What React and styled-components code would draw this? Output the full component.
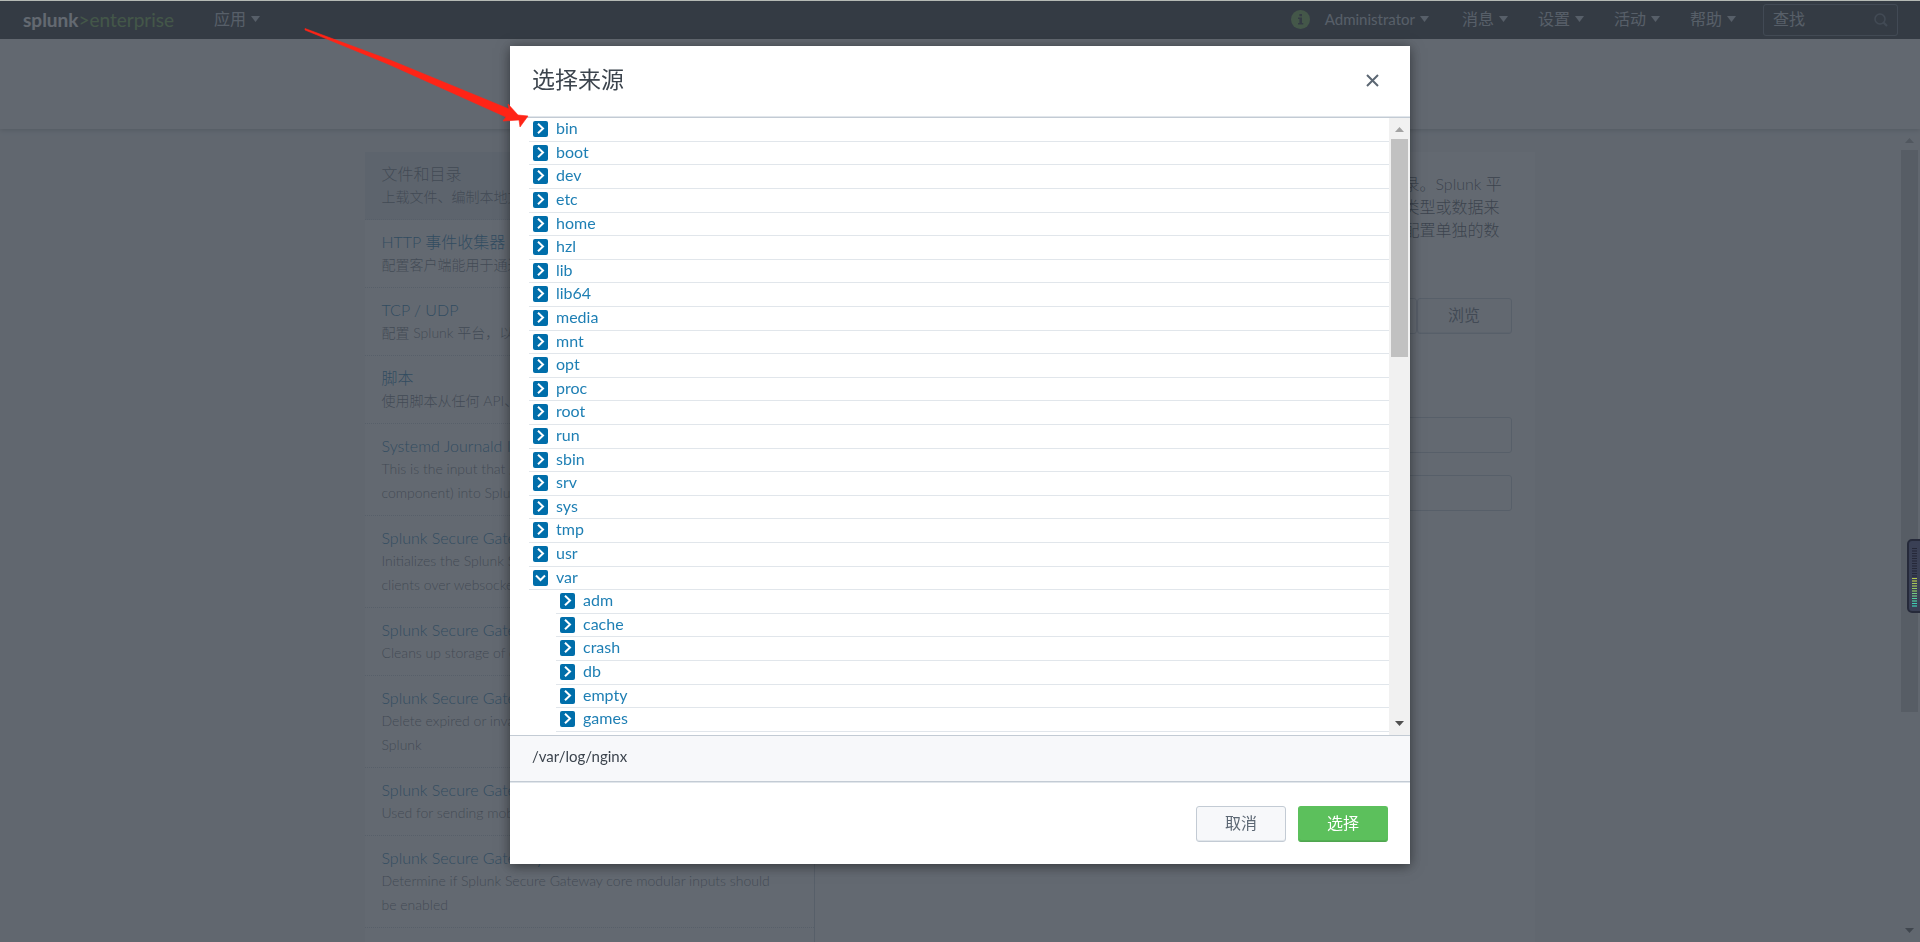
import React, { useState } from "react";
import styled, { createGlobalStyle } from "styled-components";

const GlobalStyle = createGlobalStyle`
  *, *::before, *::after {
    box-sizing: border-box;
  }

  body {
    margin: 0;
    font-family: Lato, "Noto Sans CJK SC", sans-serif;
    font-size: 16px;
    color: #3c444d;
    background: #f2f4f5;
  }

  button, input {
    font-family: inherit;
  }

  a {
    color: #006eaa;
    text-decoration: none;
  }
`;

const StyledPage = styled.div`
  display: flex;
  flex-direction: column;
  height: 100vh;
  overflow: hidden;
  border-top: 1px solid #b5bab5;
`;

const StyledNav = styled.nav`
  display: flex;
  flex-shrink: 0;
  align-items: center;
  height: 38px;
  padding: 0 22px 0 23px;
  background: #171d21;
`;

const StyledLogo = styled.a`
  display: flex;
  align-items: center;
  width: 191px;
  font-size: 19px;
  line-height: 24px;
  color: #65a637;
`;

const StyledLogoName = styled.span`
  font-weight: 700;
  color: #ffffff;
`;

const StyledNavRight = styled.div`
  display: flex;
  align-items: center;
  gap: 27px;
  margin-left: auto;
`;

const StyledMenus = styled.div`
  display: flex;
  align-items: center;
  gap: 30px;
`;

const StyledUser = styled.div`
  display: flex;
  align-items: center;
  gap: 15px;
  padding-right: 3px;
`;

const StyledInfoIcon = styled.svg`
  margin-bottom: 2px;
`;

const StyledNavItem = styled.button`
  display: flex;
  align-items: center;
  gap: 5px;
  padding: 0 0 3px;
  border: 0;
  background: none;
  font-size: ${props => (props.$small ? "15px" : "16px")};
  line-height: 24px;
  color: #c3cbd4;
`;

const StyledSearch = styled.label`
  display: flex;
  align-items: center;
  width: 135px;
  height: 32px;
  padding: 0 9px;
  border: 1px solid #5c6773;
  border-radius: 3px;
`;

const StyledSearchInput = styled.input`
  flex: 1;
  min-width: 0;
  padding: 0 0 3px;
  border: 0;
  outline: 0;
  background: none;
  font-size: 16px;
  color: #c3cbd4;

  &::placeholder {
    color: #c3cbd4;
    opacity: 1;
  }
`;

const StyledWizardBar = styled.div`
  position: relative;
  flex-shrink: 0;
  height: 90px;
  background: #f7f8fa;
  box-shadow: 0 1px 5px rgba(0, 0, 0, 0.3);
`;

const StyledMain = styled.div`
  display: flex;
  flex: 1;
  min-height: 0;
`;

const StyledContent = styled.main`
  display: flex;
  flex: 1;
  justify-content: center;
  padding-top: 23px;
  font-weight: 300;
`;

const StyledSourceList = styled.ul`
  width: 450px;
  min-height: 800px;
  margin: 0;
  padding: 0;
  list-style: none;
  background: #ffffff;
  border-right: 1px solid #c3cbd4;
`;

const StyledSource = styled.li`
  padding: 11px 30px 10px 17px;
  border-bottom: 1px dotted #c3cbd4;
  background: ${props => (props.$selected ? "#e1e6eb" : "none")};
`;

const StyledSourceTitle = styled.a`
  display: block;
  line-height: 22px;
  color: ${props => (props.$selected ? "#5c6773" : "#006eaa")};
`;

const StyledSourceText = styled.p`
  margin: 0;
  font-size: 14px;
  line-height: 24px;
  white-space: pre-line;
  color: #5c6773;
`;

const StyledSettings = styled.section`
  width: 720px;
  min-height: 800px;
  padding: 20px 23px;
  background: #ffffff;
`;

const StyledIntro = styled.p`
  width: 108px;
  margin: 0 0 57px auto;
  line-height: 23px;
  white-space: nowrap;
`;

const StyledFieldRow = styled.div`
  display: flex;
  margin: 0 0 ${props => props.$gap || 22}px 220px;
`;

const StyledInput = styled.input`
  flex: 1;
  min-width: 0;
  height: 36px;
  border: 1px solid #c3cbd4;
  border-radius: 3px;
  background: #ffffff;
`;

const StyledButton = styled.button`
  width: ${props => props.$width || 90}px;
  height: 36px;
  padding: 0 0 5px;
  border: 1px solid ${props => (props.$primary ? "#5cc05c" : "#c3cbd4")};
  border-bottom-color: ${props => (props.$primary ? "#4fa54f" : "#c3cbd4")};
  border-radius: 3px;
  background: ${props => (props.$primary ? "#5cc05c" : "#f7f8fa")};
  box-shadow: inset 0 -1px 0 ${props => (props.$primary ? "#53af53" : "#e1e6eb")};
  font-size: 16px;
  color: ${props => (props.$primary ? "#ffffff" : "#5c6773")};
`;

const StyledBackdrop = styled.div`
  position: fixed;
  inset: 1px 0 0;
  display: flex;
  justify-content: center;
  align-items: flex-start;
  padding-top: 45px;
  background: rgba(60, 68, 77, 0.8);
`;

const StyledModal = styled.div`
  width: 900px;
  max-width: 100%;
  background: #ffffff;
  box-shadow: 0 2px 12px rgba(0, 0, 0, 0.5);
`;

const StyledModalHeader = styled.header`
  display: flex;
  align-items: center;
  justify-content: space-between;
  padding: 18px 22px 23px;
  border-bottom: 1px solid #c3cbd4;
  box-shadow: inset 0 -1px 0 #e1e6eb;
`;

const StyledTitle = styled.h2`
  margin: 0;
  font-size: 23px;
  font-weight: 400;
  line-height: 30px;
`;

const StyledClose = styled.button`
  display: flex;
  padding: 3px 9px 0 0;
  border: 0;
  background: none;
`;

const StyledModalBody = styled.div`
  display: flex;
  height: 617px;
  padding-left: 19px;
  overflow: hidden;
`;

const StyledTree = styled.ul`
  flex: 1;
  margin: 0;
  padding: 0 0 0 ${props => (props.$nested ? "27px" : "0")};
  list-style: none;
`;

/* rows share a pitch a little under 24px */
const StyledNode = styled.li`
  --row: 24px;

  &:nth-child(5n + 2),
  &:nth-child(5n) {
    --row: 23px;
  }
`;

const StyledNodeRow = styled.div`
  display: flex;
  align-items: flex-start;
  gap: 8px;
  height: var(--row);
  padding-left: 4px;
  border-bottom: 1px solid #e1e6eb;
`;

const StyledToggle = styled.button`
  display: block;
  width: 15px;
  height: 16px;
  margin-top: 3px;
  padding: 0;
  border: 0;
  border-radius: 2px;
  background: #006eaa;

  svg {
    display: block;
  }
`;

const StyledNodeName = styled.a`
  font-size: 16px;
  line-height: 20px;
  color: #1e7fb4;
`;

const StyledPath = styled.div`
  padding: 10px 22px 14px;
  border-top: 1px solid #c3cbd4;
  border-bottom: 1px solid #c3cbd4;
  background: #f7f8fa;
  font-size: 15px;
  line-height: 21px;
`;

const StyledModalFooter = styled.footer`
  display: flex;
  justify-content: flex-end;
  gap: 12px;
  padding: 24px 22px 22px;
  box-shadow: inset 0 1px 0 #e1e6eb;
`;

const StyledScrollbar = styled.div`
  display: flex;
  flex-direction: column;
  flex-shrink: 0;
  align-items: center;
  width: 21px;
  padding: 9px 0;
  background: ${props => (props.$plain ? "none" : "#f1f1f1")};
`;

const StyledThumb = styled.div`
  width: 17px;
  height: ${props => props.$size}px;
  margin: 7px 0 auto;
  background: ${props => props.$color};
`;

const StyledMeter = styled.svg`
  position: fixed;
  top: 539px;
  right: 0;
`;

const StyledArrow = styled.svg`
  position: fixed;
  top: 24px;
  left: 300px;
  pointer-events: none;
`;

const sources = [
  { title: "文件和目录", text: "上载文件、编制本地文件索引或监控整个目录。" },
  { title: "HTTP 事件收集器", text: "配置客户端能用于通过 HTTP 发送数据的令牌。" },
  { title: "TCP / UDP", text: "配置 Splunk 平台，以侦听网络端口。" },
  { title: "脚本", text: "使用脚本从任何 API、服务或数据库获取数据。" },
  {
    title: "Systemd Journald Input",
    text: "This is the input that gets data from journald (systemd\ncomponent) into Splunk"
  },
  {
    title: "Splunk Secure Gateway",
    text: "Initializes the Splunk Secure Gateway to talk to mobile\nclients over websockets"
  },
  { title: "Splunk Secure Gateway", text: "Cleans up storage of old data" },
  {
    title: "Splunk Secure Gateway",
    text: "Delete expired or invalid tokens created by\nSplunk"
  },
  { title: "Splunk Secure Gateway", text: "Used for sending mobile alerts" },
  {
    title: "Splunk Secure Gateway",
    text: "Determine if Splunk Secure Gateway core modular inputs should\nbe enabled"
  }
];

const directories = [
  "bin", "boot", "dev", "etc", "home", "hzl", "lib", "lib64", "media", "mnt",
  "opt", "proc", "root", "run", "sbin", "srv", "sys", "tmp", "usr", "var"
];

const children = {
  var: ["adm", "cache", "crash", "db", "empty", "games"]
};

const menus = ["消息", "设置", "活动", "帮助"];

const Caret = () => (
  <svg width="9" height="6" viewBox="0 0 9 6" aria-hidden="true">
    <path d="M0 0H9L4.5 6Z" fill="currentColor" />
  </svg>
);

const NavItem = ({ children: label, small }) => (
  <StyledNavItem type="button" $small={small}>
    {label}
    <Caret />
  </StyledNavItem>
);

const Scrollbar = ({ size, thumb, up, down, plain }) => (
  <StyledScrollbar $plain={plain} aria-hidden="true">
    <svg width="9" height="5" viewBox="0 0 9 5">
      <path d="M4.5 0L9 5H0Z" fill={up} />
    </svg>
    <StyledThumb $size={size} $color={thumb} />
    <svg width="9" height="5" viewBox="0 0 9 5">
      <path d="M0 0H9L4.5 5Z" fill={down} />
    </svg>
  </StyledScrollbar>
);

const TreeNode = ({ name }) => {
  const [open, setOpen] = useState(name === "var");
  const nested = children[name];

  return (
    <StyledNode>
      <StyledNodeRow>
        <StyledToggle
          type="button"
          aria-label={name}
          aria-expanded={open}
          onClick={() => setOpen(!open)}
        >
          <svg width="15" height="16" viewBox="0 0 15 16">
            <path
              d={open ? "M3 5.5L7.5 10L12 5.5" : "M5 2.8L10 7.5L5 12.2"}
              fill="none"
              stroke="#ffffff"
              strokeWidth="2"
            />
          </svg>
        </StyledToggle>
        <StyledNodeName href="#">{name}</StyledNodeName>
      </StyledNodeRow>
      {open && nested ? (
        <StyledTree $nested>
          {nested.map(child => (
            <TreeNode key={child} name={child} />
          ))}
        </StyledTree>
      ) : null}
    </StyledNode>
  );
};

const meterBars = [
  "#252838", "#252838", "#252838", "#252838", "#252838", "#252838",
  "#b6c94a", "#a5c85a", "#8fca62", "#74cb84", "#4fcfa0", "#3ed0b4"
];

const Meter = () => (
  <StyledMeter width="13" height="74" viewBox="0 0 13 74" aria-hidden="true">
    <rect x="1" y="1" width="20" height="72" rx="4" fill="#3a4055" stroke="#262a3a" strokeWidth="2" />
    {meterBars.map((color, i) => (
      <g key={i} fill={color}>
        <rect x="5" y={9 + i * 5} width="5" height="1" />
        <rect x="5" y={11 + i * 5} width="5" height="2" opacity="0.6" />
      </g>
    ))}
  </StyledMeter>
);

const Arrow = () => (
  <StyledArrow width="232" height="106" viewBox="0 0 232 106" aria-hidden="true">
    <path
      d="M5 4.5L90 36L209 85L208 80L218 91L228 92L220 103L219 96L203 97L206 93L88 40L5 6Z"
      fill="#ff2416"
      stroke="#ff2416"
      strokeWidth="0.6"
    />
  </StyledArrow>
);

const App = () => {
  const [search, setSearch] = useState("");

  return (
    <>
      <GlobalStyle />
      <StyledPage>
        <StyledNav>
          <StyledLogo href="#">
            <StyledLogoName>splunk</StyledLogoName>&gt;enterprise
          </StyledLogo>
          <NavItem>应用</NavItem>
          <StyledNavRight>
            <StyledMenus>
              <StyledUser>
                <StyledInfoIcon width="19" height="19" viewBox="0 0 19 19" aria-hidden="true">
                  <circle cx="9.5" cy="9.5" r="9.5" fill="#65a637" />
                  <path d="M8.4 4H11V6.2H8.4ZM7 7.5H11V13H12.3V14.5H7V13H8.4V9H7Z" fill="#171d21" />
                </StyledInfoIcon>
                <NavItem small>Administrator</NavItem>
              </StyledUser>
              {menus.map(menu => (
                <NavItem key={menu}>{menu}</NavItem>
              ))}
            </StyledMenus>
            <StyledSearch>
              <StyledSearchInput
                type="text"
                aria-label="查找"
                placeholder="查找"
                value={search}
                onChange={event => setSearch(event.target.value)}
              />
              <svg width="14" height="14" viewBox="0 0 14 14" aria-hidden="true">
                <circle cx="6" cy="6" r="5" fill="none" stroke="#5c6773" strokeWidth="1.5" />
                <path d="M9.5 9.5L13 13" stroke="#5c6773" strokeWidth="2" />
              </svg>
            </StyledSearch>
          </StyledNavRight>
        </StyledNav>
        <StyledWizardBar />
        <StyledMain>
          <StyledContent>
            <StyledSourceList>
              {sources.map((source, i) => (
                <StyledSource key={i} $selected={i === 0}>
                  <StyledSourceTitle href="#" $selected={i === 0}>
                    {source.title}
                  </StyledSourceTitle>
                  <StyledSourceText>{source.text}</StyledSourceText>
                </StyledSource>
              ))}
            </StyledSourceList>
            <StyledSettings>
              <StyledIntro>
                录。Splunk 平<br />
                类型或数据来
                <br />
                配置单独的数
              </StyledIntro>
              <StyledFieldRow $gap={83}>
                <StyledInput type="text" aria-label="文件或目录" />
                <StyledButton type="button" $width={95}>
                  浏览
                </StyledButton>
              </StyledFieldRow>
              <StyledFieldRow>
                <StyledInput type="text" aria-label="白名单" />
              </StyledFieldRow>
              <StyledFieldRow>
                <StyledInput type="text" aria-label="黑名单" />
              </StyledFieldRow>
            </StyledSettings>
          </StyledContent>
          <Scrollbar plain size={562} thumb="#c1c1c1" up="#a3a3a3" down="#505050" />
        </StyledMain>
      </StyledPage>
      <StyledBackdrop>
        <StyledModal role="dialog" aria-labelledby="modal-title">
          <StyledModalHeader>
            <StyledTitle id="modal-title">选择来源</StyledTitle>
            <StyledClose type="button" aria-label="关闭">
              <svg width="13" height="13" viewBox="0 0 13 13">
                <path d="M1 1L12 12M12 1L1 12" stroke="#5c6773" strokeWidth="2" />
              </svg>
            </StyledClose>
          </StyledModalHeader>
          <StyledModalBody>
            <StyledTree>
              {directories.map(name => (
                <TreeNode key={name} name={name} />
              ))}
            </StyledTree>
            <Scrollbar size={218} thumb="#c1c1c1" up="#a3a3a3" down="#505050" />
          </StyledModalBody>
          <StyledPath>/var/log/nginx</StyledPath>
          <StyledModalFooter>
            <StyledButton type="button">取消</StyledButton>
            <StyledButton type="button" $primary>
              选择
            </StyledButton>
          </StyledModalFooter>
        </StyledModal>
      </StyledBackdrop>
      <Meter />
      <Arrow />
    </>
  );
};

export default App;
